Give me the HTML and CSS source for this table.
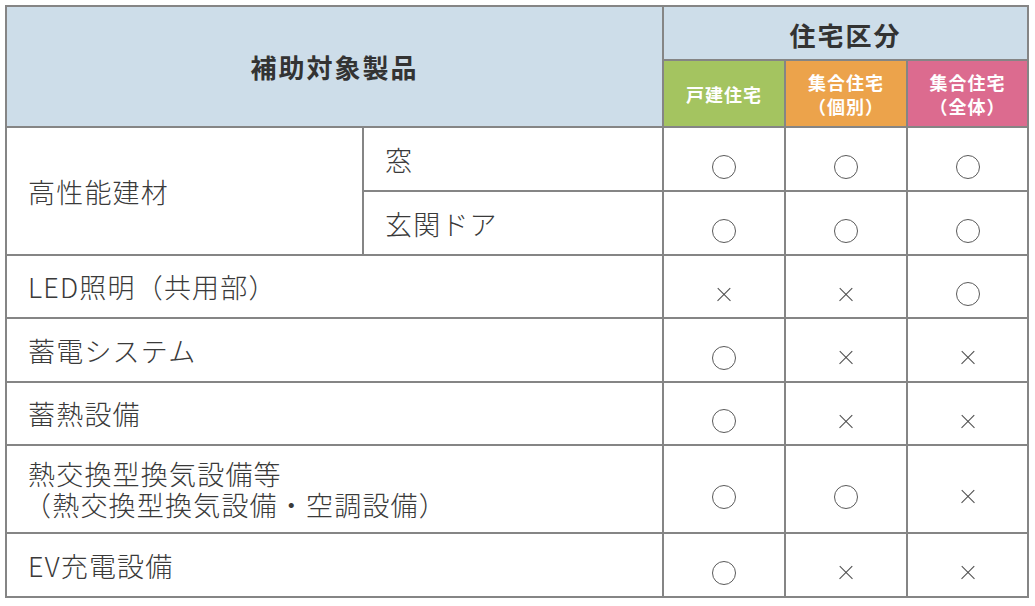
FILE: index.html
```html
<!DOCTYPE html>
<html lang="ja">
<head>
<meta charset="utf-8">
<title>補助対象製品</title>
<link rel="stylesheet" href="styles.css">
</head>
<body>
<table class="grid">
  <colgroup>
    <col class="c-main"><col class="c-sub"><col class="c-h"><col class="c-h"><col class="c-h3">
  </colgroup>
  <thead>
    <tr class="h1">
      <th class="head-main" rowspan="2" colspan="2">補助対象製品</th>
      <th class="head-main head-kubun" colspan="3">住宅区分</th>
    </tr>
    <tr class="h2">
      <th class="sub green">戸建住宅</th>
      <th class="sub orange">集合住宅<br>（個別）</th>
      <th class="sub pink">集合住宅<br>（全体）</th>
    </tr>
  </thead>
  <tbody>
    <tr class="r64">
      <td class="name" rowspan="2">高性能建材</td>
      <td class="name">窓</td>
      <td class="mark"><span class="maru"></span></td>
      <td class="mark"><span class="maru"></span></td>
      <td class="mark"><span class="maru"></span></td>
    </tr>
    <tr class="r64">
      <td class="name">玄関ドア</td>
      <td class="mark"><span class="maru"></span></td>
      <td class="mark"><span class="maru"></span></td>
      <td class="mark"><span class="maru"></span></td>
    </tr>
    <tr class="r63">
      <td class="name" colspan="2">LED照明（共用部）</td>
      <td class="mark"><span class="batsu"></span></td>
      <td class="mark"><span class="batsu"></span></td>
      <td class="mark"><span class="maru"></span></td>
    </tr>
    <tr class="r64">
      <td class="name" colspan="2">蓄電システム</td>
      <td class="mark"><span class="maru"></span></td>
      <td class="mark"><span class="batsu"></span></td>
      <td class="mark"><span class="batsu"></span></td>
    </tr>
    <tr class="r63">
      <td class="name" colspan="2">蓄熱設備</td>
      <td class="mark"><span class="maru"></span></td>
      <td class="mark"><span class="batsu"></span></td>
      <td class="mark"><span class="batsu"></span></td>
    </tr>
    <tr class="r88">
      <td class="name" colspan="2">熱交換型換気設備等<br><span class="paren">（</span>熱交換型換気設備・空調設備）</td>
      <td class="mark"><span class="maru"></span></td>
      <td class="mark"><span class="maru"></span></td>
      <td class="mark"><span class="batsu"></span></td>
    </tr>
    <tr class="r64">
      <td class="name" colspan="2">EV充電設備</td>
      <td class="mark"><span class="maru"></span></td>
      <td class="mark"><span class="batsu"></span></td>
      <td class="mark"><span class="batsu"></span></td>
    </tr>
  </tbody>
</table>
</body>
</html>
```
FILE: styles.css
```css
html, body {
  margin: 0;
  padding: 0;
  background: #ffffff;
}
body {
  padding: 5px 0 0 5px;
  font-family: "Noto Sans CJK JP", "Noto Sans", sans-serif;
  color: #3a3a3a;
}
.grid {
  border-collapse: collapse;
  table-layout: fixed;
  width: 1024px;
  border: 2px solid #858585;
}
.c-main { width: 357px; }
.c-sub { width: 300px; }
.c-h { width: 122px; }
.c-h3 { width: 121px; }
.grid th, .grid td {
  border: 2px solid #858585;
  padding: 0;
}
.h1 { height: 54px; }
.h2 { height: 67px; }
.r63 { height: 63px; }
.r64 { height: 64px; }
.r88 { height: 88px; }
.grid .head-main {
  background: #cddde9;
  color: #333333;
  font-size: 26px;
  font-weight: 700;
  letter-spacing: 2px;
  text-align: center;
  vertical-align: middle;
}
.grid .head-kubun { padding-top: 2px; }
.grid .sub {
  color: #ffffff;
  font-size: 18px;
  font-weight: 700;
  line-height: 24px;
  letter-spacing: 1px;
  text-align: center;
  vertical-align: middle;
}
.green { background: #a4c460; }
.orange { background: #eca34b; }
.pink { background: #dc6b8f; }
.grid .name {
  font-size: 27px;
  font-weight: 300;
  letter-spacing: 1.2px;
  line-height: 31px;
  padding-left: 21px;
  text-align: left;
  vertical-align: middle;
  color: #3a3a3a;
}
.paren { margin-left: -4px; }
.grid .mark {
  text-align: center;
  vertical-align: middle;
  padding-top: 15px;
  line-height: 0;
}
.maru {
  display: inline-block;
  box-sizing: border-box;
  width: 24px;
  height: 24px;
  border: 1.4px solid #5a5a5a;
  border-radius: 50%;
}
.batsu {
  display: inline-block;
  position: relative;
  width: 14px;
  height: 14px;
}
.batsu::before, .batsu::after {
  content: "";
  position: absolute;
  left: -2px;
  top: 6.5px;
  width: 18px;
  height: 1.3px;
  background: #4a4a4a;
  transform: rotate(45deg);
}
.batsu::after {
  transform: rotate(-45deg);
}
```
